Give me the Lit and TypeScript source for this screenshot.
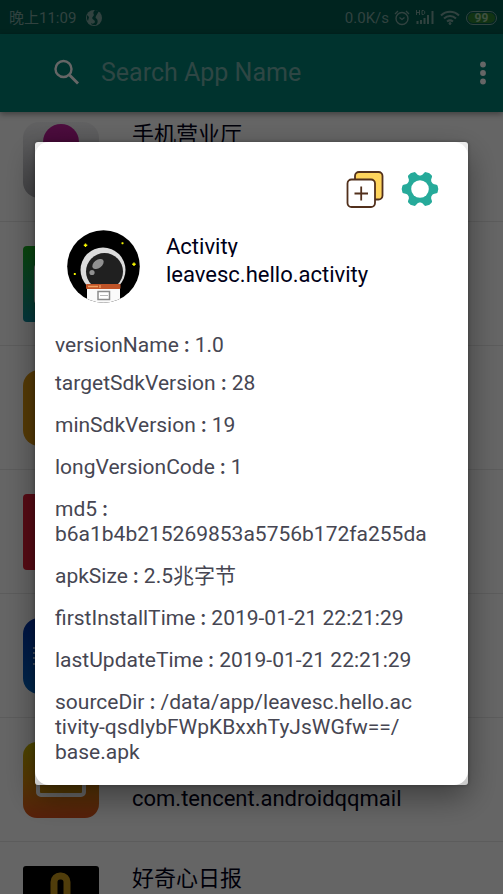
import { LitElement, html, css, svg, nothing } from "lit";
import { customElement } from "lit/decorators.js";

type IconName = "carrier" | "green" | "amber" | "red" | "blue" | "mail" | "daily";

interface AppItem {
  icon: IconName;
  name?: string;
  pkg?: string;
}

const apps: AppItem[] = [
  { icon: "carrier", name: "手机营业厅" },
  { icon: "green" },
  { icon: "amber" },
  { icon: "red" },
  { icon: "blue" },
  { icon: "mail", pkg: "com.tencent.androidqqmail" },
  { icon: "daily", name: "好奇心日报" },
];

const details: { label: string; lines: string[] }[] = [
  { label: "versionName", lines: ["1.0"] },
  { label: "targetSdkVersion", lines: ["28"] },
  { label: "minSdkVersion", lines: ["19"] },
  { label: "longVersionCode", lines: ["1"] },
  { label: "md5", lines: ["", "b6a1b4b215269853a5756b172fa255da"] },
  { label: "apkSize", lines: ["2.5兆字节"] },
  { label: "firstInstallTime", lines: ["2019-01-21 22:21:29"] },
  { label: "lastUpdateTime", lines: ["2019-01-21 22:21:29"] },
  {
    label: "sourceDir",
    lines: ["/data/app/leavesc.hello.ac", "tivity-qsdIybFWpKBxxhTyJsWGfw==/", "base.apk"],
  },
];

const gearPath = (() => {
  const points: string[] = [];
  for (let i = 0; i < 6; i++) {
    for (const [r, d] of [[12.2, -23], [13.6, -15], [16.4, -10], [16.8, 0], [16.4, 10], [13.6, 15], [12.2, 23]]) {
      const a = ((i * 60 + d) * Math.PI) / 180;
      points.push(`${(r * Math.cos(a)).toFixed(2)} ${(r * Math.sin(a)).toFixed(2)}`);
    }
  }
  return `M${points.join("L")}Z`;
})();

const iconArt: Record<IconName, unknown> = {
  carrier: svg`
    <defs>
      <linearGradient id="c1" x2="0" y2="1"><stop offset="0" stop-color="#f2f2f4"/><stop offset="1" stop-color="#a8a8ae"/></linearGradient>
      <linearGradient id="c2" x2="0" y2="1"><stop offset="0" stop-color="#c0209c"/><stop offset="1" stop-color="#a0107c"/></linearGradient>
    </defs>
    <rect width="76" height="76" rx="16" fill="url(#c1)"/>
    <circle cx="38" cy="20" r="18" fill="url(#c2)"/>`,
  green: svg`
    <defs><linearGradient id="g1" x2="0" y2="1"><stop offset="0" stop-color="#18b020"/><stop offset="1" stop-color="#0c8a9c"/></linearGradient></defs>
    <rect width="76" height="76" rx="4" fill="url(#g1)"/>
    <rect x="11" y="18" width="54" height="40" rx="4" fill="#ffffff"/>`,
  amber: svg`<rect width="76" height="76" rx="16" fill="#d89410"/>`,
  red: svg`<rect width="76" height="76" rx="4" fill="#dc1c34"/>`,
  blue: svg`
    <defs><linearGradient id="b1" x2="0" y2="1"><stop offset="0" stop-color="#0030a8"/><stop offset="1" stop-color="#0064c0"/></linearGradient></defs>
    <rect width="76" height="76" rx="16" fill="url(#b1)"/>
    <path d="M10 30h4M10 35h4M10 40h4M10 46h4" stroke="#a8c8f0" stroke-width="2"/>`,
  mail: svg`
    <defs><linearGradient id="m1" x2="0" y2="1"><stop offset="0" stop-color="#c4b400"/><stop offset="0.5" stop-color="#d88c08"/><stop offset="1" stop-color="#d8501c"/></linearGradient></defs>
    <rect width="76" height="76" rx="14" fill="url(#m1)"/>
    <rect x="15" y="20" width="46" height="33" rx="3" fill="#c88808" stroke="#ffffff" stroke-width="4"/>`,
  daily: svg`
    <rect width="76" height="76" rx="3" fill="#000000"/>
    <rect x="31" y="10" width="13" height="50" rx="6" fill="none" stroke="#c8981c" stroke-width="7"/>`,
};

@customElement("status-bar")
class StatusBar extends LitElement {
  static styles = css`
    :host {
      display: flex;
      align-items: center;
      box-sizing: border-box;
      height: 34px;
      padding: 2px 6px 0 9px;
      background: #005a4e;
      color: #7aa59f;
      font-size: 15px;
      line-height: 20px;
    }
    .globe { margin-left: 10px; }
    .right { display: flex; align-items: center; margin-left: auto; gap: 5px; }
    svg { display: block; }
    .battery {
      display: flex;
      box-sizing: border-box;
      width: 31px;
      height: 14px;
      padding: 1px;
      margin-left: 1px;
      border: 1px solid #7aa59f;
      border-radius: 7px;
    }
    .level {
      flex: 1;
      border-radius: 5px;
      background: #2c8030;
      color: #9cc8a4;
      font-size: 12px;
      font-weight: 700;
      line-height: 10px;
      text-align: center;
    }
  `;
  render() {
    return html`
      <span>晚上11:09</span>
      <svg class="globe" width="16" height="16" viewBox="0 0 16 16" aria-hidden="true">
        <circle cx="8" cy="8" r="8" fill="#7aa59f" />
        <path d="M9 0c-2 2-2 3-1 5l-2 3c1 2 3 2 3 4-1 2-3 2-4 1 0 1 1 2 2 2h3c2-2 2-4 1-6-1-1-2-1-1-3l3-5zM1 5l2 2-1 4-1-2z" fill="#005a4e" />
      </svg>
      <div class="right">
        <span>0.0K/s</span>
        <svg width="16" height="18" viewBox="0 0 16 18" fill="none" stroke="#7aa59f" aria-hidden="true">
          <circle cx="8" cy="9.500" r="6" stroke-width="1.400" />
          <path d="M5.500 8.500l2.500 2 2.500-2M1 5l3-3M15 5l-3-3" stroke-width="1.300" />
        </svg>
        <svg width="20" height="18" viewBox="0 0 20 18" fill="none" stroke="#7aa59f" aria-hidden="true">
          <path d="M1.500 1v5M4.500 1v5M1.500 3.500h3M7 1.500v4h1.500l1.200-1v-2l-1.200-1z" stroke-width="1" />
          <path d="M2.500 12v3M6 11v4M9.500 9v6M13 6v9M17.500 2v13" stroke-width="2" />
        </svg>
        <svg width="20" height="18" viewBox="0 0 20 18" fill="none" stroke="#7aa59f" aria-hidden="true">
          <path d="M1 6.500c5-5 13-5 18 0M4 9.500c3.500-3.500 8.500-3.500 12 0M7 12.500c2-1.500 4-1.500 6 0" stroke-width="2" />
          <circle cx="10" cy="14.500" r="1" fill="#7aa59f" />
        </svg>
        <div class="battery"><span class="level">99</span></div>
      </div>
    `;
  }
}

@customElement("search-header")
class SearchHeader extends LitElement {
  static styles = css`
    :host {
      display: flex;
      align-items: center;
      height: 78px;
      padding: 0 8px 0 52px;
      background: #008074;
      box-shadow: 0 2px 6px rgba(0, 0, 0, 0.4);
      position: relative;
      z-index: 1;
    }
    svg { display: block; }
    input {
      flex: 1;
      min-width: 0;
      margin-left: 19px;
      padding: 0;
      border: 0;
      outline: 0;
      background: none;
      color: #ffffff;
      font: inherit;
      font-size: 25px;
      line-height: 32px;
    }
    input::placeholder { color: #74b0aa; opacity: 1; }
    button { padding: 0 4px; border: 0; background: none; }
  `;
  render() {
    return html`
      <svg width="30" height="30" viewBox="0 0 30 30" fill="none" stroke="#ffffff" aria-hidden="true">
        <circle cx="11.500" cy="11" r="8" stroke-width="2.400" />
        <path d="M17.500 17l8.500 8.500" stroke-width="2.800" />
      </svg>
      <input type="search" placeholder="Search App Name" aria-label="Search App Name" />
      <button aria-label="More options">
        <svg width="16" height="26" viewBox="0 0 16 26" fill="#ffffff">
          <circle cx="8" cy="4.500" r="2.900" /><circle cx="8" cy="13" r="2.900" /><circle cx="8" cy="21.500" r="2.900" />
        </svg>
      </button>
    `;
  }
}

@customElement("app-row")
class AppRow extends LitElement {
  static properties = { item: { attribute: false } };
  declare item: AppItem;
  static styles = css`
    :host {
      display: flex;
      box-sizing: border-box;
      height: 124px;
      padding: 24px 23px 0;
      gap: 33px;
      border-bottom: 1px solid #e6e6e6;
      color: #000018;
      font-size: 22px;
      line-height: 26px;
    }
    svg { display: block; flex: none; }
    .text { display: flex; flex-direction: column; height: 70px; }
    .pkg { margin-top: auto; }
  `;
  render() {
    const { icon, name, pkg } = this.item;
    return html`
      <svg width="76" height="76" viewBox="0 0 76 76" aria-hidden="true">${iconArt[icon]}</svg>
      <div class="text">
        ${name ? html`<span>${name}</span>` : nothing}
        ${pkg ? html`<span class="pkg">${pkg}</span>` : nothing}
      </div>
    `;
  }
}

@customElement("app-dialog")
class AppDialog extends LitElement {
  static styles = css`
    :host {
      display: block;
      flex: 1;
      border-radius: 3px;
      background: linear-gradient(#ececec, #cccccc);
      box-shadow: 0 12px 32px rgba(0, 0, 0, 0.4), 0 0 4px rgba(0, 0, 0, 0.3);
    }
    .card { padding: 28px 20px 20px; border-radius: 14px; background: #ffffff; }
    .actions { display: flex; justify-content: flex-end; gap: 17px; padding-right: 9px; }
    button { padding: 0; border: 0; background: none; }
    svg { display: block; flex: none; }
    .profile {
      display: flex;
      gap: 26px;
      margin: 22px 0 30px 12px;
      color: #000018;
      font-size: 22px;
      line-height: 28px;
    }
    .names { padding-top: 3px; }
    h2 { height: 24px; margin: 0 0 4px; overflow: hidden; font: inherit; }
    p { margin: 0; }
    dl { margin: 0; color: #464652; font-size: 21px; line-height: 25px; }
    .entry { margin-top: 17px; }
    .entry:first-child { margin-top: 0; }
    .entry:nth-child(2) { margin-top: 13px; }
    dt, dd { display: inline; margin: 0; }
    .colon {
      font-family: "Noto Sans CJK TC", sans-serif;
      font-size: 16px;
      font-weight: 700;
      line-height: 16px;
    }
  `;
  render() {
    return html`
      <div class="card" role="dialog" aria-label="Activity">
        <div class="actions">
          <button aria-label="Copy">
            <svg width="38" height="38" viewBox="0 0 38 38" fill="none" stroke="#52301c" stroke-width="1.800">
              <rect x="9" y="2" width="27.500" height="27.500" rx="4" fill="#ffd45c" />
              <rect x="1.500" y="9.500" width="27.500" height="27.500" rx="4" fill="#ffffff" />
              <path d="M8.500 23.500h13.500M15.200 16.500v14" />
            </svg>
          </button>
          <button aria-label="Settings">
            <svg width="38" height="38" viewBox="-19 -19 38 38">
              <path d=${gearPath} fill="#26aa9a" stroke="#26aa9a" stroke-width="3" stroke-linejoin="round" />
              <circle r="8.800" fill="#ffffff" />
            </svg>
          </button>
        </div>
        <div class="profile">
          <svg width="73" height="73" viewBox="0 0 73 73" aria-hidden="true">
            <defs><clipPath id="disc"><circle cx="36.500" cy="36.500" r="36.300" /></clipPath></defs>
            <g clip-path="url(#disc)">
              <rect width="73" height="73" fill="#000000" />
              <circle cx="36" cy="40" r="22.500" fill="#dcdcdc" />
              <circle cx="37.500" cy="41.500" r="18.500" fill="#202020" />
              <ellipse cx="31" cy="34" rx="6.500" ry="4" transform="rotate(-38 31 34)" fill="#909090" />
              <circle cx="25" cy="42.500" r="2.600" fill="#909090" />
              <path d="M13 57h46v6H13z" fill="#000000" />
              <path d="M20 58h33v15H20z" fill="#fafafa" />
              <rect x="19" y="54" width="34.500" height="5" rx="1" fill="#c05428" />
              <path d="M21 56.500h10M33 55v3" stroke="#f0a060" stroke-width="1.300" />
              <rect x="31" y="61.500" width="11.500" height="8" fill="#ffffff" stroke="#8c8c8c" stroke-width="1.500" />
              <path d="M33 65.500h8" stroke="#b8b8b8" />
              <path d="M18.500 13.500v3.500M16.800 15.200h3.500M55.500 12.300v2M54.500 13.300h2M67 32.500v3.500M65.200 34.200h3.500M7.800 43v2M6.800 44h2" stroke="#f4f400" stroke-width="1.400" />
            </g>
          </svg>
          <div class="names">
            <h2>Activity</h2>
            <p>leavesc.hello.activity</p>
          </div>
        </div>
        <dl>
          ${details.map(
            (d) => html`<div class="entry"><dt>${d.label}<span class="colon">：</span></dt><dd>${d.lines.map((line, i) => html`${i ? html`<br />` : nothing}${line}`)}</dd></div>`
          )}
        </dl>
      </div>
    `;
  }
}

@customElement("app-root")
class AppRoot extends LitElement {
  static styles = css`
    :host {
      display: block;
      height: 100vh;
      overflow: hidden;
      background: #fcfcfc;
      font-family: Roboto, "Noto Sans CJK SC", sans-serif;
    }
    .list { margin-top: -14px; }
    .scrim {
      position: fixed;
      inset: 0;
      z-index: 2;
      display: flex;
      align-items: center;
      box-sizing: border-box;
      padding: 33px 35px 0;
      background: rgba(0, 0, 0, 0.6);
    }
  `;
  render() {
    return html`
      <status-bar></status-bar>
      <search-header></search-header>
      <div class="list">${apps.map((item) => html`<app-row .item=${item}></app-row>`)}</div>
      <div class="scrim"><app-dialog></app-dialog></div>
    `;
  }
}
